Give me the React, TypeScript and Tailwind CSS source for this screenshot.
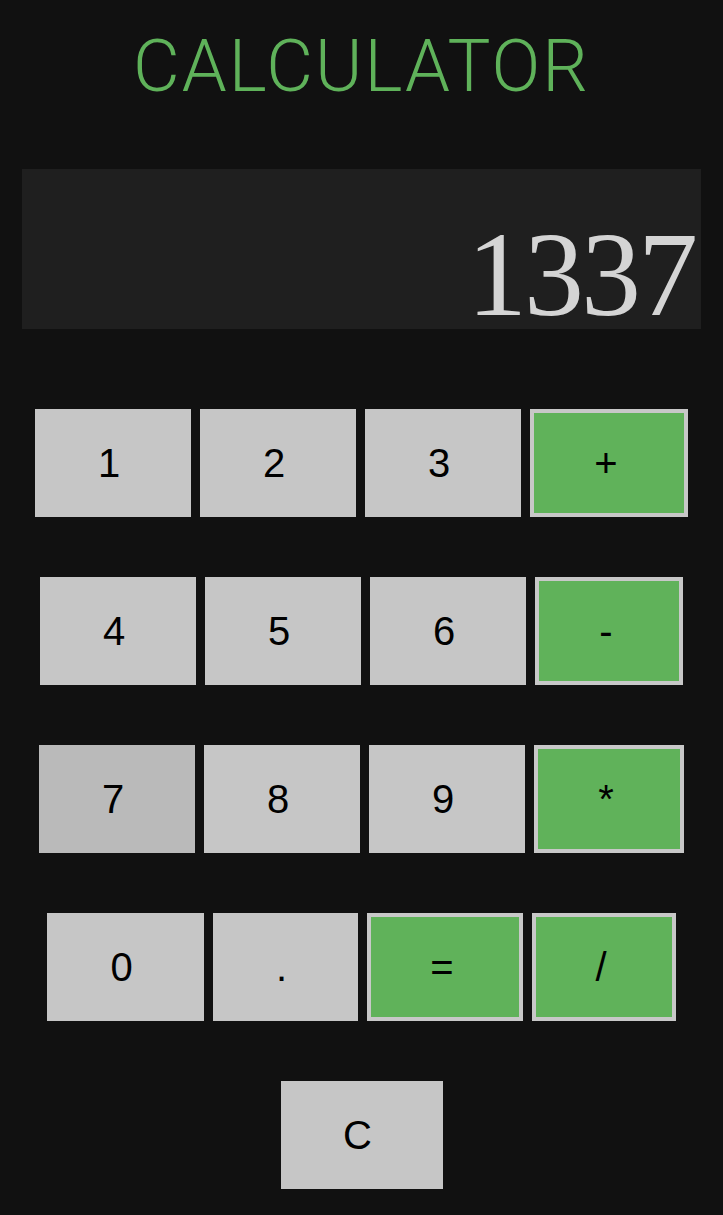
const rows: { label: string; w: number; op?: boolean; dim?: boolean }[][] = [
  [
    { label: "1", w: 156 },
    { label: "2", w: 156 },
    { label: "3", w: 156 },
    { label: "+", w: 158, op: true },
  ],
  [
    { label: "4", w: 156 },
    { label: "5", w: 156 },
    { label: "6", w: 156 },
    { label: "-", w: 148, op: true },
  ],
  [
    { label: "7", w: 156, dim: true },
    { label: "8", w: 156 },
    { label: "9", w: 156 },
    { label: "*", w: 150, op: true },
  ],
  [
    { label: "0", w: 157 },
    { label: ".", w: 145 },
    { label: "=", w: 156, op: true },
    { label: "/", w: 144, op: true },
  ],
  [{ label: "C", w: 162 }],
];

function Key({ label, w, op, dim }: { label: string; w: number; op?: boolean; dim?: boolean }) {
  return (
    <button
      style={{ width: w }}
      className={`h-[108px] flex items-center justify-center text-[40px] leading-none text-black font-['Liberation_Sans',Arial,sans-serif] ${
        op
          ? "bg-[#60b25a] border-4 border-[#c8c8c8] pr-[6px]"
          : dim
          ? "bg-[#bababa] pr-[8px]"
          : "bg-[#c6c6c6] pr-[8px]"
      }`}
    >
      {label}
    </button>
  );
}

export default function App() {
  return (
    <div className="min-h-screen bg-[#111111] flex flex-col items-center">
      <div className="h-[133px] flex items-center justify-center">
        <h1 className="text-[72px] leading-none font-light tracking-[2px] text-[#5fb25a] font-['Roboto','Liberation_Sans',sans-serif]">
          CALCULATOR
        </h1>
      </div>

      <div className="mt-[36px] w-[679px] h-[160px] bg-[#1f1f1f] flex items-end justify-end pr-[6px]">
        <span className="text-[120px] leading-[0.9] tracking-[-3px] text-[#d4d4d4] font-['Liberation_Serif','Times_New_Roman',serif]">
          1337
        </span>
      </div>

      <div className="mt-[80px] flex flex-col gap-[60px]">
        {rows.map((row, i) => (
          <div key={i} className="flex justify-center gap-[9px]">
            {row.map((k) => (
              <Key key={k.label} {...k} />
            ))}
          </div>
        ))}
      </div>
    </div>
  );
}
